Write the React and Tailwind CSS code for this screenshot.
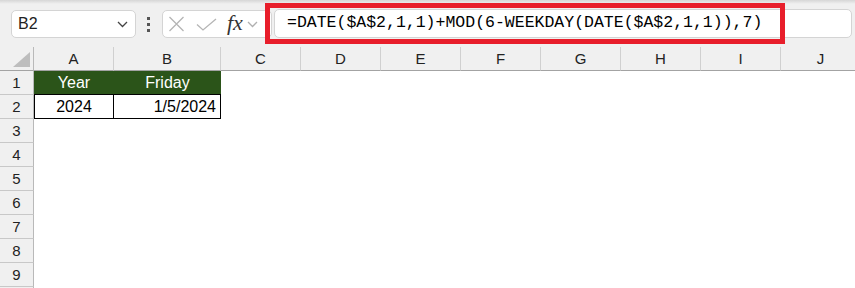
import React from "react";

const columns = [
  { label: "A", w: "w-[80px]" },
  { label: "B", w: "w-[107px]" },
  { label: "C", w: "w-[80px]" },
  { label: "D", w: "w-[80px]" },
  { label: "E", w: "w-[80px]" },
  { label: "F", w: "w-[80px]" },
  { label: "G", w: "w-[80px]" },
  { label: "H", w: "w-[80px]" },
  { label: "I", w: "w-[80px]" },
  { label: "J", w: "w-[80px]" },
];

const formula = "=DATE($A$2,1,1)+MOD(6-WEEKDAY(DATE($A$2,1,1)),7)";

function RowHeader({ n }) {
  return (
    <div className="w-[34px] h-[24px] shrink-0 flex items-center justify-center bg-[#f0f0f0] border-r border-b border-r-[#b9b9b9] border-b-[#c8c8c8] text-[15px] text-[#222] pt-[1px]">
      {n}
    </div>
  );
}

function FormulaBar() {
  return (
    <div className="relative h-[47px] bg-[#f0f0f0]">
      <div className="h-[4px] bg-gradient-to-b from-[#d6d6d6] to-[#f0f0f0]" />
      <div className="flex items-start pt-[6px]">
        {/* name box */}
        <div className="ml-[11px] w-[125px] h-[28px] bg-white border border-[#d4d4d4] rounded-[5px] flex items-center justify-between pl-[6px] pr-[7px]">
          <span className="text-[16px] text-[#222]">B2</span>
          <svg width="11" height="7" viewBox="0 0 11 7" fill="none">
            <path d="M1 1l4.5 4.5L10 1" stroke="#444" strokeWidth="1.3" />
          </svg>
        </div>
        {/* divider dots */}
        <div className="ml-[11px] mt-[7px] flex flex-col gap-[3px]">
          <span className="w-[3px] h-[3px] bg-[#555]" />
          <span className="w-[3px] h-[3px] bg-[#555]" />
          <span className="w-[3px] h-[3px] bg-[#555]" />
        </div>
        {/* cancel / enter / fx */}
        <div className="ml-[12px] w-[110px] h-[28px] bg-white border border-[#d4d4d4] rounded-[5px] flex items-center pl-[5px]">
          <svg width="17" height="16" viewBox="0 0 17 16" fill="none">
            <path d="M1.5 1l14 14M15.5 1l-14 14" stroke="#b5b5b5" strokeWidth="1.3" />
          </svg>
          <svg className="ml-[11px]" width="21" height="13" viewBox="0 0 21 13" fill="none">
            <path d="M1 6.5l6 5.5L20 1" stroke="#b5b5b5" strokeWidth="1.3" />
          </svg>
          <span className="ml-[10px] text-[22px] leading-none italic text-[#333] font-['Liberation_Serif',serif] -mt-[3px]">
            fx
          </span>
          <svg className="ml-[4px]" width="11" height="7" viewBox="0 0 11 7" fill="none">
            <path d="M1 1l4.5 4.5L10 1" stroke="#b0b0b0" strokeWidth="1.3" />
          </svg>
        </div>
        {/* formula input */}
        <div className="ml-[2px] -mt-[1px] w-[578px] h-[29px] bg-white border border-[#d4d4d4] rounded-[5px] flex items-center pl-[12px]">
          <span className="font-['Liberation_Mono',monospace] text-[16.5px] text-black whitespace-nowrap">
            {formula}
          </span>
        </div>
      </div>
      {/* annotation box */}
      <div className="absolute left-[265px] top-[3px] w-[520px] h-[41px] border-[5px] border-[#e81e2b]" />
    </div>
  );
}

export default function App() {
  const rows = [3, 4, 5, 6, 7, 8, 9];
  return (
    <div className="w-[855px] h-[288px] overflow-hidden bg-white font-['Liberation_Sans',Arial,sans-serif]">
      <FormulaBar />

      {/* column headers */}
      <div className="flex h-[24px]">
        <div className="relative w-[34px] h-[24px] shrink-0 bg-[#f0f0f0] border-r border-b border-r-[#b9b9b9] border-b-[#a3a3a3]">
          <svg className="absolute left-[13px] top-[5px]" width="17" height="15" viewBox="0 0 17 15">
            <polygon points="17,0 17,15 0,15" fill="#bdbdbd" />
          </svg>
        </div>
        {columns.map((c) => (
          <div
            key={c.label}
            className={`${c.w} h-[24px] shrink-0 bg-[#f0f0f0] border-r border-b border-r-[#d0d0d0] border-b-[#a3a3a3] flex items-center justify-center text-[15px] text-[#222] pt-[1px]`}
          >
            {c.label}
          </div>
        ))}
      </div>

      {/* row 1 */}
      <div className="flex h-[24px]">
        <RowHeader n={1} />
        <div className="w-[80px] h-[24px] shrink-0 bg-[#2b5419] border-b border-black flex items-center justify-center text-[16px] text-white pt-[1px]">
          Year
        </div>
        <div className="w-[107px] h-[24px] shrink-0 bg-[#2b5419] border-b border-black flex items-center justify-center text-[16px] text-white pt-[1px]">
          Friday
        </div>
      </div>

      {/* row 2 */}
      <div className="flex h-[24px]">
        <RowHeader n={2} />
        <div className="w-[80px] h-[24px] shrink-0 border-l border-r border-b border-black flex items-center justify-center text-[16px] text-black pt-[1px]">
          2024
        </div>
        <div className="w-[107px] h-[24px] shrink-0 border-r border-b border-black flex items-center justify-end pr-[4px] text-[16px] text-black pt-[1px]">
          1/5/2024
        </div>
      </div>

      {rows.map((n) => (
        <div key={n} className="flex h-[24px]">
          <RowHeader n={n} />
        </div>
      ))}
      <div className="flex h-[24px]">
        <div className="w-[34px] h-[24px] shrink-0 bg-[#f0f0f0] border-r border-r-[#b9b9b9]" />
      </div>
    </div>
  );
}
